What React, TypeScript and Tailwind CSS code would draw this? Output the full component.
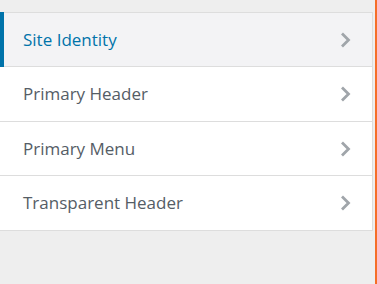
const items = [
  { label: 'Site Identity', h: 'h-[54px]' },
  { label: 'Primary Header', h: 'h-[55px]' },
  { label: 'Primary Menu', h: 'h-[54px]' },
  { label: 'Transparent Header', h: 'h-[55px]' },
];

function Chevron() {
  return (
    <svg width="11" height="16" viewBox="0 0 11 16" className="shrink-0">
      <path d="M2 1.5 L8.5 8 L2 14.5" fill="none" stroke="#a0a5aa" strokeWidth="2.8" />
    </svg>
  );
}

export default function App() {
  return (
    <div className="w-[377px] h-[284px] bg-[#eeeeee] flex" style={{ fontFamily: '"Open Sans", sans-serif' }}>
      <div className="w-[375px] pt-3">
        <ul className="border-t border-[#dddddd] mr-[2px]">
          {items.map(({ label, h }, i) => (
            <li
              key={label}
              className={`relative ${h} flex items-center justify-between pl-[23px] pr-[21px] border-b border-r border-[#dddddd] ${
                i === 0 ? 'bg-[#f3f3f5]' : 'bg-white'
              }`}
            >
              {i === 0 && <span className="absolute left-0 -top-px -bottom-px w-1 bg-[#0073aa]" />}
              <span className={`text-[17px] font-medium ${i === 0 ? 'text-[#0073aa]' : 'text-[#555d66]'}`}>{label}</span>
              <Chevron />
            </li>
          ))}
        </ul>
      </div>
      <div className="w-[2px] bg-[#f56e28]" />
    </div>
  );
}
